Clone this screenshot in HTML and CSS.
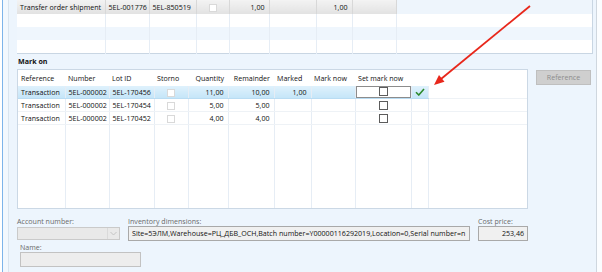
FILE: index.html
```html
<!DOCTYPE html>
<html lang="en">
<head>
  <meta charset="UTF-8" />
  <title>Mark on</title>
  <link rel="stylesheet" href="styles.css">
</head>
<body>
  <div class="frame">
    <div class="edge"></div>
    <div class="strip"></div>
    <div class="panel">
      <table class="grid top-grid">
        <colgroup>
          <col style="width: 88px"><col style="width: 44px"><col style="width: 47px"><col style="width: 33px">
          <col style="width: 40px"><col style="width: 47px"><col style="width: 36px"><col style="width: 44px"><col>
        </colgroup>
        <tr class="row-current first">
          <td>Transfer order shipment</td>
          <td>5EL-001776</td>
          <td>5EL-850519</td>
          <td class="c"><span class="chk light"></span></td>
          <td class="r">1,00</td>
          <td></td>
          <td class="r">1,00</td>
          <td></td>
          <td class="blank"></td>
        </tr>
        <tr><td></td><td></td><td></td><td></td><td></td><td></td><td></td><td></td><td></td></tr>
        <tr class="alt"><td></td><td></td><td></td><td></td><td></td><td></td><td></td><td></td><td></td></tr>
        <tr><td></td><td></td><td></td><td></td><td></td><td></td><td></td><td></td><td></td></tr>
      </table>

      <div class="section-title">Mark on</div>

      <div class="mark-row">
        <div class="grid-box">
          <table class="grid mark-grid">
            <colgroup>
              <col style="width: 47px"><col style="width: 44px"><col style="width: 45px"><col style="width: 34px">
              <col style="width: 40px"><col style="width: 46px"><col style="width: 37px"><col style="width: 44px">
              <col style="width: 56px"><col style="width: 17px"><col>
            </colgroup>
            <tr class="head">
              <th>Reference</th>
              <th>Number</th>
              <th>Lot ID</th>
              <th>Storno</th>
              <th class="r">Quantity</th>
              <th class="r">Remainder</th>
              <th>Marked</th>
              <th>Mark now</th>
              <th>Set mark now</th>
              <th></th>
              <th></th>
            </tr>
            <tr class="selected">
              <td>Transaction</td>
              <td>5EL-000002</td>
              <td>5EL-170456</td>
              <td class="c"><span class="chk light"></span></td>
              <td class="r">11,00</td>
              <td class="r">10,00</td>
              <td class="r">1,00</td>
              <td></td>
              <td class="editor"><div class="edit-box"><span class="chk dark"></span></div></td>
              <td class="c">
                <svg class="tick" width="10" height="8" viewBox="0 0 10 8"><polyline points="1,4.2 3.8,7 9,1" fill="none" stroke="#2d8a2d" stroke-width="1.6"/></svg>
              </td>
              <td class="plain"></td>
            </tr>
            <tr>
              <td>Transaction</td>
              <td>5EL-000002</td>
              <td>5EL-170454</td>
              <td class="c"><span class="chk light"></span></td>
              <td class="r">5,00</td>
              <td class="r">5,00</td>
              <td></td>
              <td></td>
              <td class="c"><span class="chk dark"></span></td>
              <td></td>
              <td></td>
            </tr>
            <tr>
              <td>Transaction</td>
              <td>5EL-000002</td>
              <td>5EL-170452</td>
              <td class="c"><span class="chk light"></span></td>
              <td class="r">4,00</td>
              <td class="r">4,00</td>
              <td></td>
              <td></td>
              <td class="c"><span class="chk dark"></span></td>
              <td></td>
              <td></td>
            </tr>
            <tr class="filler"><td></td><td></td><td></td><td></td><td></td><td></td><td></td><td></td><td></td><td></td><td></td></tr>
          </table>
        </div>
        <button class="btn" disabled>Reference</button>
      </div>

      <div class="fields">
        <div class="field account">
          <label>Account number:</label>
          <div class="combo">
            <span class="combo-arrow">
              <svg width="7" height="5" viewBox="0 0 7 5"><polyline points="0.5,1 3.5,4 6.5,1" fill="none" stroke="#c4c4c4" stroke-width="1"/></svg>
            </span>
          </div>
        </div>
        <div class="field inventory">
          <label>Inventory dimensions:</label>
          <div class="input">Site=5ЭЛМ,Warehouse=РЦ_ДБВ_ОСН,Batch number=Y00000116292019,Location=0,Serial number=n</div>
        </div>
        <div class="field cost">
          <label>Cost price:</label>
          <div class="input r">253,46</div>
        </div>
      </div>
      <div class="field name">
        <label>Name:</label>
        <div class="input empty"></div>
      </div>
    </div>
    <div class="right-gap"></div>

    <svg class="arrow" width="602" height="272" viewBox="0 0 602 272">
      <line x1="530" y1="6" x2="441" y2="79" stroke="#e8271b" stroke-width="1.8"/>
      <polygon points="434,85 444.5,81.8 439,75" fill="#e8271b"/>
    </svg>
  </div>
</body>
</html>
```

FILE: styles.css
```css
* {
  box-sizing: border-box;
}
body {
  margin: 0;
  background: #ffffff;
  font-family: 'Open Sans', 'Noto Sans', sans-serif;
  font-size: 7.1px;
  color: #111111;
}
.frame {
  position: relative;
  display: flex;
  width: 602px;
  height: 272px;
  padding-left: 2px;
  overflow: hidden;
}
.edge {
  width: 1px;
  background: #7db4ea;
}
.strip {
  width: 5px;
  background: #f2f8fe;
}
.panel {
  width: 589px;
  background: #edf5fd;
  border-left: 1px solid #d9e5f0;
  border-right: 1px solid #cfd7df;
  padding: 0 4px 0 8px;
}
.right-gap {
  flex: 1;
  background: #fbfdff;
}

/* grids */
.grid {
  border-collapse: collapse;
  table-layout: fixed;
  background: #ffffff;
}
.grid td,
.grid th {
  padding: 0 3px;
  border-right: 1px solid #e6edf5;
  white-space: nowrap;
  overflow: hidden;
  font-weight: normal;
  text-align: left;
}
.grid .r {
  text-align: right;
  padding-right: 4px;
}
.grid .c {
  text-align: center;
}
.top-grid {
  width: 576px;
  border-right: 1px solid #c9d6e3;
  border-bottom: 1px solid #c9d6e3;
}
.top-grid tr {
  height: 13px;
}
.top-grid tr.first {
  height: 14px;
}
.top-grid tr.alt td {
  background: #eff6fd;
}
.row-current td {
  background: linear-gradient(#f3f3f3, #e2e2e2);
  border-right-color: #d8d8d8;
}
.row-current td.blank {
  background: #eef5fc;
  border-right: none;
}
.top-grid td:last-child {
  border-right: none;
}

.section-title {
  font-weight: bold;
  line-height: 15px;
  height: 15px;
  padding-left: 1px;
}

.mark-row {
  display: flex;
  align-items: flex-start;
  gap: 8px;
}
.grid-box {
  width: 511px;
  height: 140px;
  border: 1px solid #cbd8e5;
  background: #ffffff;
}
.mark-grid {
  width: 100%;
  height: 100%;
}
.mark-grid tr {
  height: 13px;
}
.mark-grid tr.head {
  height: 16px;
}
.mark-grid tr.head th {
  border-right: none;
}
.mark-grid td {
  border-bottom: 1px solid #eef2f6;
}
.mark-grid tr.filler {
  height: auto;
}
.mark-grid tr.filler td {
  border-bottom: none;
}
.mark-grid td:last-child {
  border-right: none;
}
.selected td {
  background: linear-gradient(#dff1fc, #c5e5f8);
  border-bottom-color: #b9dcf3;
}
.selected td.plain {
  background: #ffffff;
  border-bottom-color: #eef2f6;
}
.selected td.editor {
  padding: 0;
  background: #ffffff;
}
.edit-box {
  height: 12px;
  border: 1px solid #8c8c8c;
  display: flex;
  align-items: center;
  justify-content: center;
}
.chk {
  display: inline-block;
  width: 8px;
  height: 8px;
  background: #ffffff;
  vertical-align: middle;
}
.chk.light {
  border: 1px solid #d9d9d9;
}
.chk.dark {
  width: 9px;
  height: 9px;
  border: 1px solid #5c5c5c;
}
.tick {
  display: block;
  margin: 0 auto;
}

.btn {
  width: 55px;
  height: 15px;
  margin-top: 1px;
  padding: 0;
  border: 1px solid #bfbfbf;
  background: #cfcfcf;
  color: #8c8c8c;
  font-family: inherit;
  font-size: 7.1px;
}

/* bottom form */
.fields {
  display: flex;
  gap: 8px;
  margin-top: 7px;
}
.field label {
  display: block;
  line-height: 10px;
  height: 10px;
  color: #6a6a6a;
}
.account {
  width: 103px;
}
.inventory {
  width: 342px;
}
.cost {
  width: 50px;
}
.combo {
  height: 13px;
  margin-top: 1px;
  border: 1px solid #cacaca;
  background: #e9e9e9;
  display: flex;
  justify-content: flex-end;
}
.combo-arrow {
  width: 12px;
  border-left: 1px solid #dadada;
  display: flex;
  align-items: center;
  justify-content: center;
}
.input {
  height: 15px;
  line-height: 13px;
  border: 1px solid #a9a9a9;
  background: #f0f0f0;
  padding: 0 3px;
  white-space: nowrap;
  overflow: hidden;
}
.input.r {
  text-align: right;
}
.name {
  width: 121px;
  margin-left: 3px;
  margin-top: 2px;
}
.name label {
  line-height: 9px;
  height: 9px;
}
.input.empty {
  border-color: #c2c2c2;
  background: #ededed;
}

.arrow {
  position: absolute;
  left: 0;
  top: 0;
  pointer-events: none;
}
```
